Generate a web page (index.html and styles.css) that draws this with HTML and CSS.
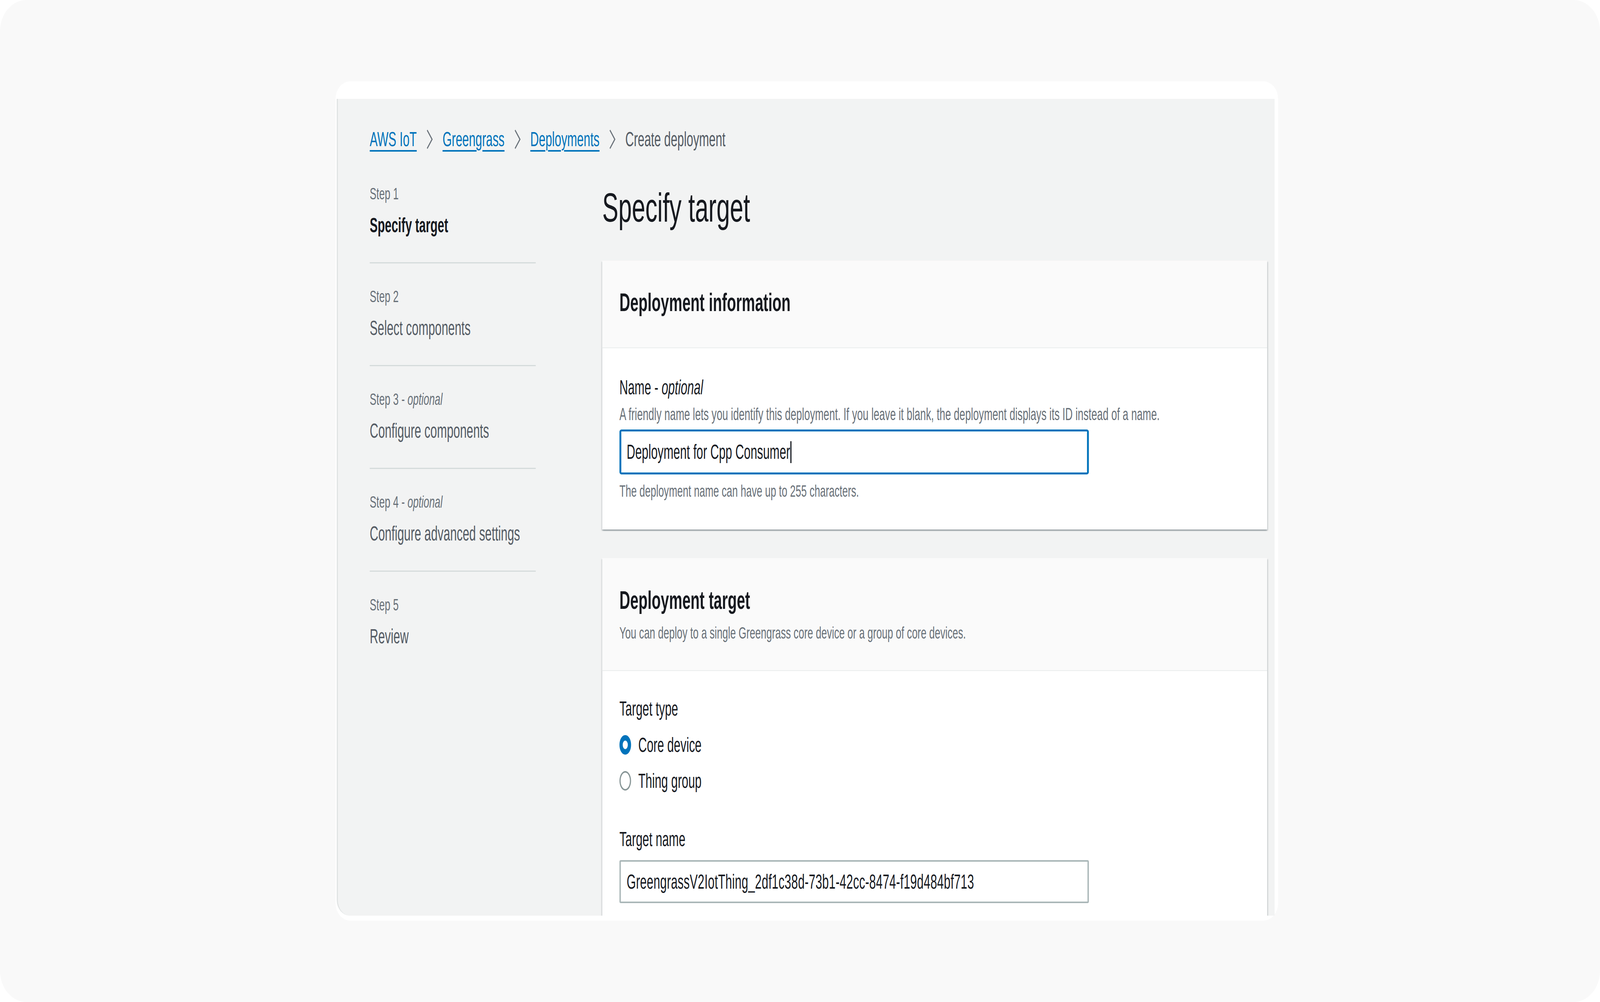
FILE: index.html
```html
<!DOCTYPE html>
<html>
<head>
    <meta charset="UTF-8">
    <title>Create deployment | AWS IoT Greengrass</title>
    <link rel="stylesheet" href="styles.css">
</head>
<body>
    <div class="frame">
        <div class="window">
            <div class="page">
                <!-- the captured console is squeezed horizontally in the shot -->
                <div class="screen">
                    <nav class="breadcrumbs">
                        <a href="#">AWS IoT</a>
                        <svg class="crumb-sep" viewBox="0 0 29 55"><polyline points="4,4 25,27.5 4,51"/></svg>
                        <a href="#">Greengrass</a>
                        <svg class="crumb-sep" viewBox="0 0 29 55"><polyline points="4,4 25,27.5 4,51"/></svg>
                        <a href="#">Deployments</a>
                        <svg class="crumb-sep" viewBox="0 0 29 55"><polyline points="4,4 25,27.5 4,51"/></svg>
                        <span class="crumb-current">Create deployment</span>
                    </nav>

                    <div class="layout">
                        <ul class="steps">
                            <li class="step active">
                                <div class="step-num">Step 1</div>
                                <div class="step-title">Specify target</div>
                            </li>
                            <li class="step">
                                <div class="step-num">Step 2</div>
                                <div class="step-title">Select components</div>
                            </li>
                            <li class="step">
                                <div class="step-num">Step 3 - <i>optional</i></div>
                                <div class="step-title">Configure components</div>
                            </li>
                            <li class="step">
                                <div class="step-num">Step 4 - <i>optional</i></div>
                                <div class="step-title">Configure advanced settings</div>
                            </li>
                            <li class="step">
                                <div class="step-num">Step 5</div>
                                <div class="step-title">Review</div>
                            </li>
                        </ul>

                        <main class="content">
                            <h1>Specify target</h1>

                            <section class="card">
                                <div class="card-header">
                                    <h2>Deployment information</h2>
                                </div>
                                <div class="card-body">
                                    <div class="label">Name - <i>optional</i></div>
                                    <div class="description">A friendly name lets you identify this deployment. If you leave it blank, the deployment displays its ID instead of a name.</div>
                                    <div class="input focused">Deployment for Cpp Consumer<span class="caret"></span></div>
                                    <div class="hint">The deployment name can have up to 255 characters.</div>
                                </div>
                            </section>

                            <section class="card">
                                <div class="card-header">
                                    <h2>Deployment target</h2>
                                    <div class="header-desc">You can deploy to a single Greengrass core device or a group of core devices.</div>
                                </div>
                                <div class="card-body tall">
                                    <div class="label">Target type</div>
                                    <div class="radio-group">
                                        <div class="radio-row">
                                            <span class="radio checked"></span>
                                            <span>Core device</span>
                                        </div>
                                        <div class="radio-row">
                                            <span class="radio"></span>
                                            <span>Thing group</span>
                                        </div>
                                    </div>
                                    <div class="label spaced">Target name</div>
                                    <div class="input plain">GreengrassV2IotThing_2df1c38d-73b1-42cc-8474-f19d484bf713</div>
                                </div>
                            </section>
                        </main>
                    </div>
                </div>
            </div>
        </div>
    </div>
</body>
</html>
```

FILE: styles.css
```css
:root {
    --link-color: #0073bb;
    --text-color: #16191f;
    --muted-color: #545b64;
    --light-color: #687078;
    --page-bg: #f2f3f3;
    --divider: #d5dbdb;
    /* 0.7 squeeze of the shot times the 4096/4817 width of the viewport */
    --squeeze: 0.5952;
}

* {
    box-sizing: border-box;
    margin: 0;
    padding: 0;
}

body {
    background: #fff;
    font-family: "Liberation Sans", Arial, sans-serif;
    color: var(--text-color);
}

.frame {
    height: 100vh;
    background: #f9f9f9;
    border-radius: 68px / 80px;
    padding: 208px 0 0 859px;
}

.window {
    width: 2413px;
    height: 2148px;
    background: #fff;
    border-radius: 38px / 45px;
    padding: 45px 9px 13px 3px;
    display: flex;
}

.page {
    flex: 1;
    background: var(--page-bg);
    border-left: 3px solid #e1e4e4;
    border-bottom-left-radius: 34px 40px;
    overflow: hidden;
}

.screen {
    width: calc(100% / 0.5952);
    transform: scaleX(var(--squeeze));
    transform-origin: 0 0;
    padding: 73px 32px 0 137px;
}

/* breadcrumbs */
.breadcrumbs {
    display: flex;
    align-items: center;
    gap: 41px;
    height: 60px;
    font-size: 51px;
}

.breadcrumbs a {
    color: var(--link-color);
    text-decoration: underline;
    text-decoration-thickness: 4px;
    text-underline-offset: 10px;
}

.crumb-current {
    color: var(--muted-color);
}

.crumb-sep {
    width: 29px;
    height: 55px;
}

.crumb-sep polyline {
    fill: none;
    stroke: var(--light-color);
    stroke-width: 4;
}

.layout {
    display: flex;
    gap: 286px;
    margin-top: 25px;
}

/* wizard steps */
.steps {
    list-style: none;
    width: 714px;
    flex-shrink: 0;
}

.step {
    padding: 60px 0 66px;
    border-bottom: 3px solid var(--divider);
}

.step:last-child {
    border-bottom: none;
}

.step-num {
    font-size: 43px;
    line-height: 48px;
    color: var(--light-color);
}

.step-title {
    margin-top: 30px;
    font-size: 51px;
    line-height: 56px;
    color: var(--muted-color);
}

.step.active .step-title {
    font-weight: bold;
    color: var(--text-color);
}

/* main column */
.content {
    flex: 1;
}

h1 {
    margin-top: 65px;
    margin-bottom: 81px;
    font-size: 104px;
    line-height: 110px;
    font-weight: normal;
}

.card {
    background: #fff;
    box-shadow: 0 3px 3px rgba(0, 28, 36, 0.3), 5px 3px 3px rgba(0, 28, 36, 0.12), -5px 3px 3px rgba(0, 28, 36, 0.12);
    margin-bottom: 73px;
}

.card-header {
    background: #fafafa;
    border-bottom: 2px solid #eaeded;
    padding: 69px 74px 77px;
}

.card + .card .card-header {
    padding: 70px 74px 71px;
}

h2 {
    font-size: 64px;
    line-height: 76px;
    font-weight: bold;
}

.header-desc {
    margin-top: 20px;
    font-size: 43px;
    line-height: 50px;
    color: var(--light-color);
}

.card-body {
    padding: 73px 74px 74px;
}

.card-body.tall {
    padding: 69px 74px 120px;
}

.label {
    font-size: 51px;
    line-height: 56px;
}

.label.spaced {
    margin-top: 94px;
}

.description,
.hint {
    font-size: 43px;
    line-height: 50px;
    color: var(--light-color);
}

.description {
    margin-top: 15px;
    font-size: 44px;
}

.hint {
    margin-top: 17px;
}

.input {
    width: 2019px;
    display: flex;
    align-items: center;
    font-size: 51px;
    background: #fff;
}

.input.focused {
    margin-top: 14px;
    height: 115px;
    border: solid var(--link-color);
    border-width: 5px 8px;
    border-radius: 9px / 6px;
    padding: 0 23px;
}

.input.plain {
    margin-top: 25px;
    height: 110px;
    border: solid #aab7b8;
    border-width: 4px 6px;
    border-radius: 6px / 4px;
    padding: 0 25px;
    letter-spacing: 0.5px;
}

.caret {
    display: inline-block;
    width: 5px;
    height: 56px;
    background: var(--text-color);
    margin-left: 1px;
}

/* radios */
.radio-group {
    margin-top: 36px;
    display: flex;
    flex-direction: column;
    gap: 36px;
}

.radio-row {
    display: flex;
    align-items: center;
    gap: 31px;
    height: 56px;
    font-size: 51px;
}

.radio {
    width: 50px;
    height: 50px;
    border-radius: 50%;
    border: 4px solid #879596;
    border-width: 4px 5px;
    background: #fff;
}

.radio.checked {
    border: 14px solid var(--link-color);
}
```
